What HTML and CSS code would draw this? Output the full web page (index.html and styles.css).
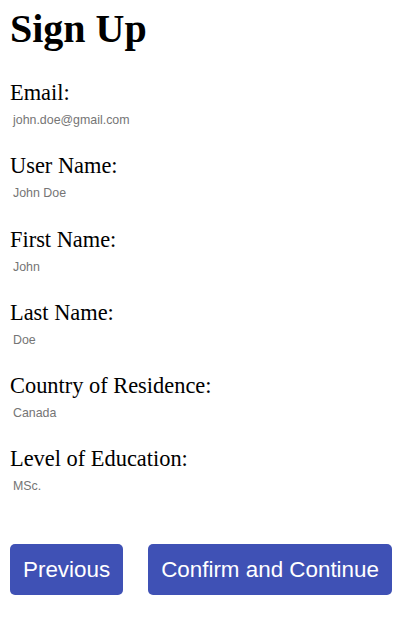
FILE: index.html
```html
<!DOCTYPE html>
<html>
<head>
<meta charset="utf-8">
<link rel="stylesheet" href="styles.css">
</head>
<body>
<div class="page">
  <h1 class="title">Sign Up</h1>
  <div class="fields">
    <div class="field"><div class="label">Email:</div><div class="value">john.doe@gmail.com</div></div>
    <div class="field"><div class="label">User Name:</div><div class="value">John Doe</div></div>
    <div class="field"><div class="label">First Name:</div><div class="value">John</div></div>
    <div class="field"><div class="label">Last Name:</div><div class="value">Doe</div></div>
    <div class="field"><div class="label">Country of Residence:</div><div class="value">Canada</div></div>
    <div class="field"><div class="label">Level of Education:</div><div class="value">MSc.</div></div>
  </div>
  <div class="actions">
    <button class="btn btn-prev">Previous</button>
    <button class="btn btn-next">Confirm and Continue</button>
  </div>
</div>
</body>
</html>
```
FILE: styles.css
```css
html, body {
  margin: 0;
  padding: 0;
  background: #fff;
}
.page {
  padding: 6px 10px 0 10px;
  font-family: "Liberation Serif", "Times New Roman", serif;
  color: #000;
}
.title {
  margin: 0;
  font-size: 40px;
  line-height: 46px;
  font-weight: bold;
}
.fields {
  margin-top: 28px;
  display: flex;
  flex-direction: column;
  gap: 26.3px;
}
.field {
  display: flex;
  flex-direction: column;
  gap: 7px;
}
.label {
  font-size: 22.4px;
  line-height: 26px;
}
.value {
  font-family: "Liberation Sans", Arial, sans-serif;
  font-size: 12.4px;
  line-height: 14px;
  color: #757575;
  padding-left: 3px;
}
.actions {
  margin-top: 51px;
  display: flex;
  gap: 25px;
}
.btn {
  font-family: "Liberation Sans", Arial, sans-serif;
  font-size: 22.4px;
  color: #fff;
  background: #3f51b5;
  border: none;
  border-radius: 5px;
  height: 51px;
  padding: 0 13px;
  margin: 0;
}
```
